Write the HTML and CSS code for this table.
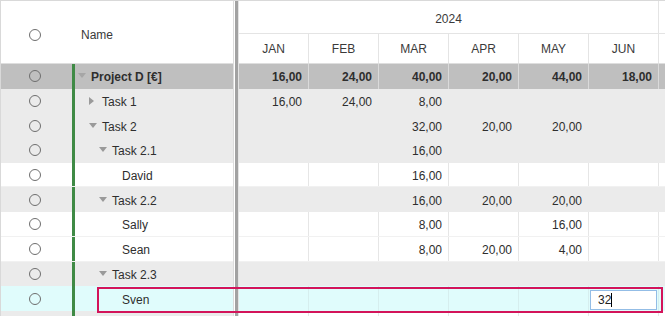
FILE: index.html
```html
<!DOCTYPE html>
<html>
<head>
<meta charset="utf-8">
<link rel="stylesheet" href="styles.css">
</head>
<body>
<div class="grid">
  <div class="lpane">
    <div class="lhead"><div class="sel"><span class="radio"></span></div><div class="hname">Name</div></div>
    <div class="row dark"><div class="sel"><span class="radio"></span></div><div class="name bold l0"><span class="tw down"></span>Project D [€]</div></div>
    <div class="row gray"><div class="sel"><span class="radio"></span></div><div class="name l1"><span class="tw collapsed"></span>Task 1</div></div>
    <div class="row gray"><div class="sel"><span class="radio"></span></div><div class="name l1"><span class="tw down"></span>Task 2</div></div>
    <div class="row gray"><div class="sel"><span class="radio"></span></div><div class="name l2"><span class="tw down"></span>Task 2.1</div></div>
    <div class="row white"><div class="sel"><span class="radio"></span></div><div class="name l3"><span class="tw"></span>David</div></div>
    <div class="row gray"><div class="sel"><span class="radio"></span></div><div class="name l2"><span class="tw down"></span>Task 2.2</div></div>
    <div class="row white"><div class="sel"><span class="radio"></span></div><div class="name l3"><span class="tw"></span>Sally</div></div>
    <div class="row white"><div class="sel"><span class="radio"></span></div><div class="name l3"><span class="tw"></span>Sean</div></div>
    <div class="row gray"><div class="sel"><span class="radio"></span></div><div class="name l2"><span class="tw down"></span>Task 2.3</div></div>
    <div class="row cyan"><div class="sel"><span class="radio"></span></div><div class="name l3"><span class="tw"></span>Sven</div></div>
    <div class="row gray"><div class="sel"><span class="radio"></span></div><div class="name l2"><span class="tw"></span></div></div>
  </div>
  <div class="splitter"></div>
  <div class="rpane">
    <div class="year-row"><div class="year">2024</div><div class="yrest"></div></div>
    <div class="months">
      <div class="m">JAN</div><div class="m">FEB</div><div class="m">MAR</div><div class="m">APR</div><div class="m">MAY</div><div class="m">JUN</div><div class="m"></div>
    </div>
    <div class="row dark bold"><div class="c">16,00</div><div class="c">24,00</div><div class="c">40,00</div><div class="c">20,00</div><div class="c">44,00</div><div class="c">18,00</div><div class="c"></div></div>
    <div class="row gray"><div class="c">16,00</div><div class="c">24,00</div><div class="c">8,00</div><div class="c"></div><div class="c"></div><div class="c"></div><div class="c"></div></div>
    <div class="row gray"><div class="c"></div><div class="c"></div><div class="c">32,00</div><div class="c">20,00</div><div class="c">20,00</div><div class="c"></div><div class="c"></div></div>
    <div class="row gray"><div class="c"></div><div class="c"></div><div class="c">16,00</div><div class="c"></div><div class="c"></div><div class="c"></div><div class="c"></div></div>
    <div class="row white"><div class="c"></div><div class="c"></div><div class="c">16,00</div><div class="c"></div><div class="c"></div><div class="c"></div><div class="c"></div></div>
    <div class="row gray"><div class="c"></div><div class="c"></div><div class="c">16,00</div><div class="c">20,00</div><div class="c">20,00</div><div class="c"></div><div class="c"></div></div>
    <div class="row white"><div class="c"></div><div class="c"></div><div class="c">8,00</div><div class="c"></div><div class="c">16,00</div><div class="c"></div><div class="c"></div></div>
    <div class="row white"><div class="c"></div><div class="c"></div><div class="c">8,00</div><div class="c">20,00</div><div class="c">4,00</div><div class="c"></div><div class="c"></div></div>
    <div class="row gray"><div class="c"></div><div class="c"></div><div class="c"></div><div class="c"></div><div class="c"></div><div class="c"></div><div class="c"></div></div>
    <div class="row cyan"><div class="c"></div><div class="c"></div><div class="c"></div><div class="c"></div><div class="c"></div><div class="c edit"><div class="inp">32<span class="caret"></span></div></div><div class="c"></div></div>
    <div class="row white"><div class="c"></div><div class="c"></div><div class="c"></div><div class="c"></div><div class="c"></div><div class="c"></div><div class="c"></div></div>
  </div>
  <div class="editbox"></div>
</div>
</body>
</html>
```
FILE: styles.css
```css
* { box-sizing: border-box; }
html, body { margin: 0; padding: 0; background: #fff; }
body {
  font-family: "Liberation Sans", Arial, sans-serif;
  font-size: 12px;
  color: #2e2e2e;
  width: 665px;
  height: 316px;
  overflow: hidden;
}
.grid {
  position: relative;
  display: flex;
  border-top: 1px solid #d9d9d9;
  height: 316px;
  overflow: hidden;
}
.lpane {
  width: 234px;
  flex: none;
  border-left: 1px solid #d9d9d9;
  border-right: 1px solid #dcdcdc;
}
.lhead {
  display: flex;
  align-items: center;
  height: 63px;
  padding-top: 6px;
  border-bottom: 1px solid #dedede;
  background: #fff;
}
.sel {
  width: 71px;
  flex: none;
  display: flex;
  align-items: center;
  padding-left: 28px;
  height: 100%;
}
.radio {
  width: 12px;
  height: 12px;
  border: 1px solid #6e6e6e;
  border-radius: 50%;
}
.hname {
  padding-left: 9px;
  color: #3a3a3a;
}
.row {
  display: flex;
  align-items: center;
  height: 24.7px;
}
.row.dark { background: #bfbfbf; }
.row.gray { background: #ebebeb; }
.row.white { background: #fff; border-bottom: 1px solid #f1f1f1; }
.row.cyan { background: #e0fcfc; }
.bold { font-weight: bold; }
.name {
  flex: 1;
  height: 100%;
  display: flex;
  align-items: center;
  padding-top: 2px;
  border-left: 3px solid #3f8a45;
  white-space: nowrap;
}
.l0 { padding-left: 3px; }
.l1 { padding-left: 14px; }
.l2 { padding-left: 24px; }
.l3 { padding-left: 34px; }
.tw {
  width: 13px;
  flex: none;
  position: relative;
  height: 8px;
}
.tw.down::before {
  content: "";
  position: absolute;
  left: 0;
  top: 0;
  border-left: 4px solid transparent;
  border-right: 4px solid transparent;
  border-top: 5px solid #9a9a9a;
}
.row.dark .tw.down::before { border-top-color: #a6a6a6; }
.tw.collapsed::before {
  content: "";
  position: absolute;
  left: 0;
  top: -1px;
  border-top: 4px solid transparent;
  border-bottom: 4px solid transparent;
  border-left: 5px solid #9a9a9a;
}
.splitter {
  width: 5px;
  flex: none;
  background: #a2a2a2;
  border-left: 1px solid #fff;
  border-right: 1px solid #e4e4e4;
}
.rpane {
  flex: 1;
  overflow: hidden;
  min-width: 0;
}
.year-row {
  display: flex;
  height: 33px;
  border-bottom: 1px solid #e4e4e4;
}
.year {
  width: 420px;
  flex: none;
  display: flex;
  align-items: center;
  justify-content: center;
  padding-top: 4px;
  border-right: 1px solid #e4e4e4;
  color: #3a3a3a;
}
.yrest { width: 70px; flex: none; }
.months {
  display: flex;
  height: 30px;
  border-bottom: 1px solid #dedede;
}
.m {
  width: 70px;
  flex: none;
  display: flex;
  align-items: center;
  justify-content: center;
  border-right: 1px solid #e4e4e4;
  color: #3a3a3a;
}
.c {
  width: 70px;
  flex: none;
  height: 100%;
  display: flex;
  align-items: center;
  justify-content: flex-end;
  padding-right: 6px;
  padding-top: 2px;
  border-right: 1px solid #e6e6e6;
}
.row.gray .c { border-right-color: #ebebeb; }
.row.dark .c { border-right-color: #dadada; }
.row.cyan .c { border-right-color: #d6eeee; }
.c.edit {
  justify-content: flex-start;
  padding: 0 0 0 1px;
}
.inp {
  width: 67px;
  height: 20px;
  margin-top: 2px;
  border: 1px solid #93bde6;
  background: #fff;
  display: flex;
  align-items: center;
  padding-left: 7px;
  color: #222;
}
.caret {
  width: 1px;
  height: 14px;
  background: #000;
}
.editbox {
  position: absolute;
  left: 97px;
  top: 286px;
  width: 566px;
  height: 26px;
  border: 2px solid #d3145a;
  pointer-events: none;
}
```
